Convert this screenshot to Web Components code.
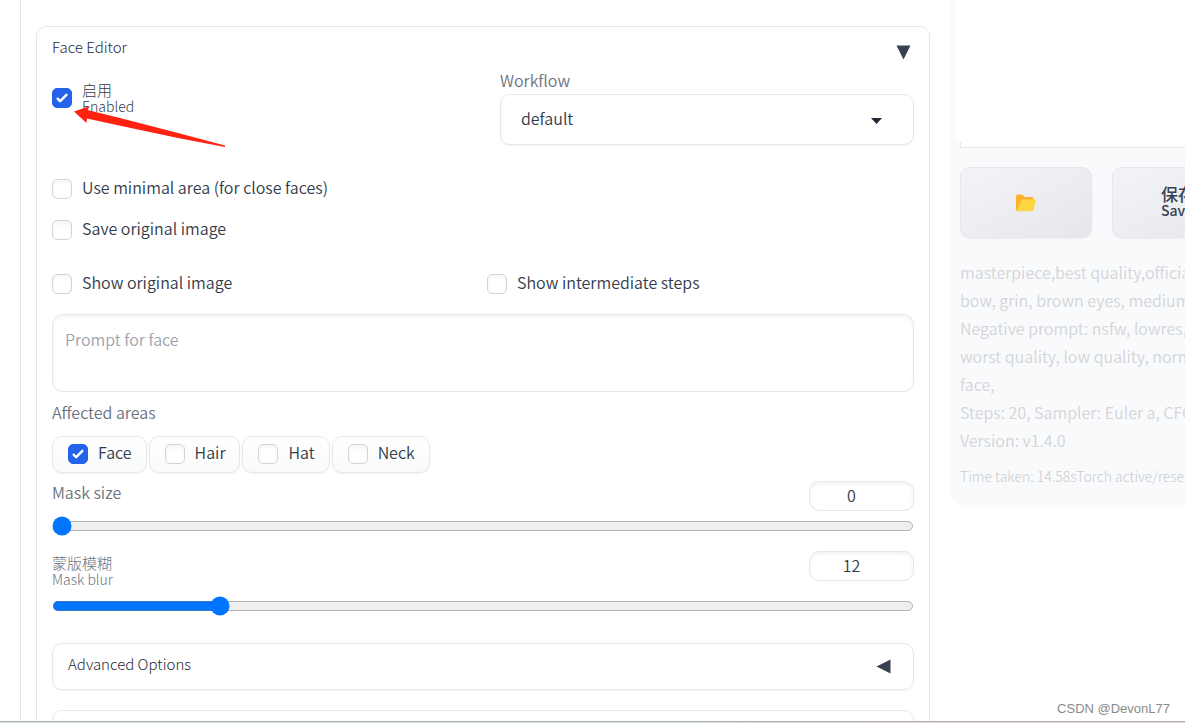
<!DOCTYPE html>
<html lang="zh-CN">
<head>
<meta charset="utf-8">
<title>Face Editor</title>
<style>
  html, body { margin: 0; height: 100%; }
  body {
    font-family: "Noto Sans CJK SC", "Noto Sans", sans-serif;
    font-size: 16px; line-height: 24px; font-weight: 350; color: #374151; background: #fff;
    overflow: hidden;
    --line: #e5e7eb; --muted: #6b7280; --ink: #323b49; --accent: #2563eb;
  }
</style>
</head>
<body>
<app-page></app-page>
<script>
const define = (name, html, setup) => {
  const tpl = document.createElement('template');
  tpl.innerHTML = '<style>*{box-sizing:border-box}input,select,textarea,button{font:inherit;color:inherit;margin:0}</style>' + html;
  customElements.define(name, class extends HTMLElement {
    constructor() {
      super();
      this.attachShadow({ mode: 'open' }).append(tpl.content.cloneNode(true));
    }
    connectedCallback() { if (setup) setup(this, this.shadowRoot); }
  });
};

/* Two-line caption: translated text above, original text below */
define('bi-label', `
<style>
  :host { display: block; font-size: var(--main-size, 15px); font-weight: var(--caption-weight, 300); line-height: 17px; }
  small { display: block; font-size: 14px; line-height: 16px; }
</style>
<slot></slot><small><slot name="sub"></slot></small>`);

/* Check box with its label; "chip" gives it a bordered pill, "tall" is for two-line captions */
define('check-field', `
<style>
  :host { display: block; }
  label { display: flex; align-items: center; gap: 10px; min-height: 24px; color: var(--ink); }
  span { line-height: 20px; padding-bottom: 4px; }
  :host([tall]) span { padding: 0; }
  input { appearance: none; flex: none; width: 20px; height: 20px; border: 1px solid #d1d5db; border-radius: 5px;
    background: #fff; box-shadow: inset 0 2px 4px rgba(0,0,0,.05); }
  input:checked { border-color: var(--accent); box-shadow: none;
    background: var(--accent) url("data:image/svg+xml,%3Csvg xmlns='http://www.w3.org/2000/svg' viewBox='0 0 16 16' fill='white'%3E%3Cpath d='M12.2 4.8a1 1 0 0 1 0 1.4l-5 5a1 1 0 0 1-1.4 0l-2-2a1 1 0 0 1 1.4-1.4L6.500 9.100l4.300-4.300a1 1 0 0 1 1.400 0z'/%3E%3C/svg%3E") center / 20px; }
  :host([chip]) label { height: 37px; padding: 0 14px 2px 15px; border: 1px solid var(--line); border-radius: 10px;
    background: linear-gradient(to bottom, #fff, #f9fafb); box-shadow: 0 1px 2px rgba(0,0,0,.05); }
</style>
<label><input type="checkbox"><span><slot></slot></span></label>`,
(el, root) => { root.querySelector('input').checked = el.hasAttribute('checked'); });

define('select-field', `
<style>
  :host { display: block; }
  label { display: block; color: var(--muted); line-height: 20px; padding-bottom: 4px; }
  .box { position: relative; }
  select { appearance: none; display: block; width: 100%; height: 51px; padding: 0 20px 4px; border: 1px solid var(--line);
    border-radius: 10px; background: #fff; color: var(--ink); box-shadow: 0 1px 2px rgba(0,0,0,.05); }
  svg { position: absolute; right: 32px; top: 24px; width: 11px; height: 6px; pointer-events: none; }
</style>
<label for="s"><slot></slot></label>
<div class="box"><select id="s"><option>default</option></select>
<svg viewBox="0 0 11 6"><path d="M0 0h11L5.500 6z" fill="#1f2937"/></svg></div>`);

define('prompt-field', `
<style>
  :host { display: block; }
  textarea { display: block; width: 100%; height: 78px; resize: none; padding: 12px; border: 1px solid var(--line);
    border-radius: 10px; background: #fff; box-shadow: inset 0 2px 4px rgba(0,0,0,.06); outline: none; }
  textarea::placeholder { color: #9ca3af; opacity: 1; }
</style>
<textarea aria-label="Prompt for face" placeholder="Prompt for face"></textarea>`);

define('range-field', `
<style>
  :host { display: block; }
  .head { display: flex; justify-content: space-between; color: var(--muted); }
  ::slotted(bi-label) { padding: 3px 0 4px; }
  label { line-height: 22px; }
  input[type=number] { appearance: textfield; width: 105px; height: 30px; padding: 0 20px 2px 0; text-align: center;
    border: 1px solid var(--line); border-radius: 10px; background: #fff; color: var(--ink);
    box-shadow: inset 0 2px 4px rgba(0,0,0,.06); }
  input::-webkit-inner-spin-button { appearance: none; margin: 0; }
  input[type=range] { display: block; width: 100%; zoom: 1.25; }
  .rail { padding-top: 5px; }
</style>
<div class="head"><label for="r"><slot></slot></label><input type="number" aria-label="value"></div>
<div class="rail"><input type="range" id="r" min="0" max="64"></div>`,
(el, root) => {
  const [num, range] = root.querySelectorAll('input');
  num.value = range.value = el.getAttribute('value');
  range.oninput = () => { num.value = range.value; };
  num.oninput = () => { range.value = num.value; };
});

/* Bordered collapsible section */
define('fold-box', `
<style>
  :host { display: block; border: 1px solid var(--line); border-radius: 10px; background: #fff; padding-bottom: 4px; }
  :host(:not([open])) { box-shadow: 0 1px 2px rgba(0,0,0,.05); }
  button { display: flex; width: 100%; justify-content: space-between; align-items: center; height: 41px;
    padding: 0 22px 2px 15px; border: 0; background: none; font-size: 15px; font-weight: 300; color: #1f2937; text-align: left; }
  :host([open]) button { padding-right: 18px; }
  svg { width: 15px; height: 15px; margin-top: 5px; fill: #374151; transform: rotate(90deg); }
  :host([open]) svg { transform: none; margin-top: 12px; }
  .body { display: none; padding: 2px 15px 0; }
  :host([open]) .body { display: block; }
</style>
<button type="button"><span></span><svg viewBox="0 0 15 15"><path d="M.5.5h14l-7 14z"/></svg></button>
<div class="body"><slot></slot></div>`,
(el, root) => {
  root.querySelector('span').textContent = el.getAttribute('heading');
  root.querySelector('button').onclick = () => el.toggleAttribute('open');
});

define('face-editor', `
<style>
  :host { display: block; }
  .top { display: grid; grid-template-columns: 1fr 1fr; column-gap: 34px; }
  .top check-field { margin-top: 11px; }
  .stack { display: grid; gap: 17px; margin-top: 32px; }
  .pair { display: grid; grid-template-columns: 1fr 1fr; gap: 8px; margin: 30px 0 18px; }
  fieldset { border: 0; margin: 8px 0; padding: 0; }
  legend { padding: 0; margin-bottom: 12px; color: var(--muted); }
  .chips { display: flex; gap: 2px; }
  range-field + range-field { margin-top: 15px; }
  fold-box { margin-top: 27px; }
  fold-box + fold-box { margin-top: 20px; }
</style>
<div class="top">
  <check-field tall checked><bi-label>启用<span slot="sub">Enabled</span></bi-label></check-field>
  <select-field>Workflow</select-field>
</div>
<div class="stack">
  <check-field>Use minimal area (for close faces)</check-field>
  <check-field>Save original image</check-field>
</div>
<div class="pair">
  <check-field>Show original image</check-field>
  <check-field>Show intermediate steps</check-field>
</div>
<prompt-field></prompt-field>
<fieldset>
  <legend>Affected areas</legend>
  <div class="chips">
    <check-field chip checked>Face</check-field><check-field chip>Hair</check-field>
    <check-field chip>Hat</check-field><check-field chip>Neck</check-field>
  </div>
</fieldset>
<range-field value="0">Mask size</range-field>
<range-field value="12"><bi-label>蒙版模糊<span slot="sub">Mask blur</span></bi-label></range-field>
<fold-box heading="Advanced Options"></fold-box>
<fold-box heading=""></fold-box>`);

define('action-button', `
<style>
  :host { display: block; flex: none; width: 132px; --main-size: 17px; --caption-weight: 500; }
  button { display: flex; align-items: center; justify-content: center; width: 100%; height: 71px; padding: 0 0 2px;
    border: 1px solid var(--line); border-radius: 10px; background: linear-gradient(to bottom right, #f3f4f6, #e5e7eb);
    box-shadow: 0 1px 2px rgba(0,0,0,.05); text-align: left; }
</style>
<button type="button"><slot></slot></button>`);

define('result-panel', `
<style>
  :host { display: block; align-self: start; background: #f9fafc; border-radius: 0 0 0 10px; padding-bottom: 19px; overflow: hidden; }
  .view { margin-left: 5px; height: 142px; background: #fff; }
  .view-end { margin-left: 9px; height: 6px; background: #fff; border: solid var(--line); border-width: 0 0 1px 1px; }
  .actions { display: flex; gap: 20px; margin: 19px 0 20px 9px; }
  .info { margin-left: 9px; color: #d3d5d8; white-space: nowrap; }
  p { margin: 0; line-height: 28px; }
  p.time { font-size: 14px; font-weight: 300; line-height: 20px; margin-top: 12px; color: #cacccf; }
  svg { width: 20px; height: 18px; margin-top: 2px; }
</style>
<div class="view"></div><div class="view-end"></div>
<div class="actions">
  <action-button><svg role="img" aria-label="Open folder" viewBox="0 0 20 18"><path d="M0 2Q0 .5 1.500.5H6L9 3h7q1.500 0 1.500 1.500V16L1 17Q0 17 0 15z" fill="#ffb02e"/><path d="M5 7q.5-1.800 2.500-1.800h11q1.500 0 1.200 1.500L17.500 15.500Q17 17.300 15 17.300H2.200Q.6 17.300 1 15.500z" fill="#fcd53f"/></svg></action-button>
  <action-button><bi-label>保存<span slot="sub">Save</span></bi-label></action-button>
</div>
<div class="info">
  <p>masterpiece,best quality,official</p>
  <p>bow, grin, brown eyes, medium</p>
  <p>Negative prompt: nsfw, lowres,</p>
  <p>worst quality, low quality, norm</p>
  <p>face,</p>
  <p>Steps: 20, Sampler: Euler a, CFG</p>
  <p>Version: v1.4.0</p>
  <p class="time">Time taken: 14.58sTorch active/reserved</p>
</div>`);

define('app-page', `
<style>
  :host { display: flex; flex-direction: column; height: 100vh; overflow: hidden; position: relative; }
  main { flex: 1; min-height: 0; display: grid; grid-template-columns: minmax(0, 1fr) 234px; gap: 21px; padding-left: 20px; overflow: hidden; }
  .left { border-left: 1px solid var(--line); padding: 26px 0 0 15px; }
  .strip { height: 2px; border-top: 1px solid #a9adb0; background: linear-gradient(to right, #dbe9e6, #d5e4e2 60%, #f1d6d2 75%, #f1d6d2); }
  .pointer { position: absolute; left: 74px; top: 105px; width: 152px; height: 42px; }
  .mark { position: absolute; right: 15px; bottom: 4px; font: 13px/20px "Liberation Sans", Arial, sans-serif; color: #8a8a8a; }
</style>
<main>
  <div class="left"><fold-box open heading="Face Editor"><face-editor></face-editor></fold-box></div>
  <result-panel></result-panel>
</main>
<div class="strip"></div>
<svg class="pointer" viewBox="0 0 152 42"><path d="M0 6.500L16 1L13.500 5L45 12.700L104 28L151 40.500V42L104 33L45 20.500L13 13.500L12.500 18z" fill="#ff2211"/></svg>
<div class="mark">CSDN @DevonL77</div>`);
</script>
</body>
</html>
